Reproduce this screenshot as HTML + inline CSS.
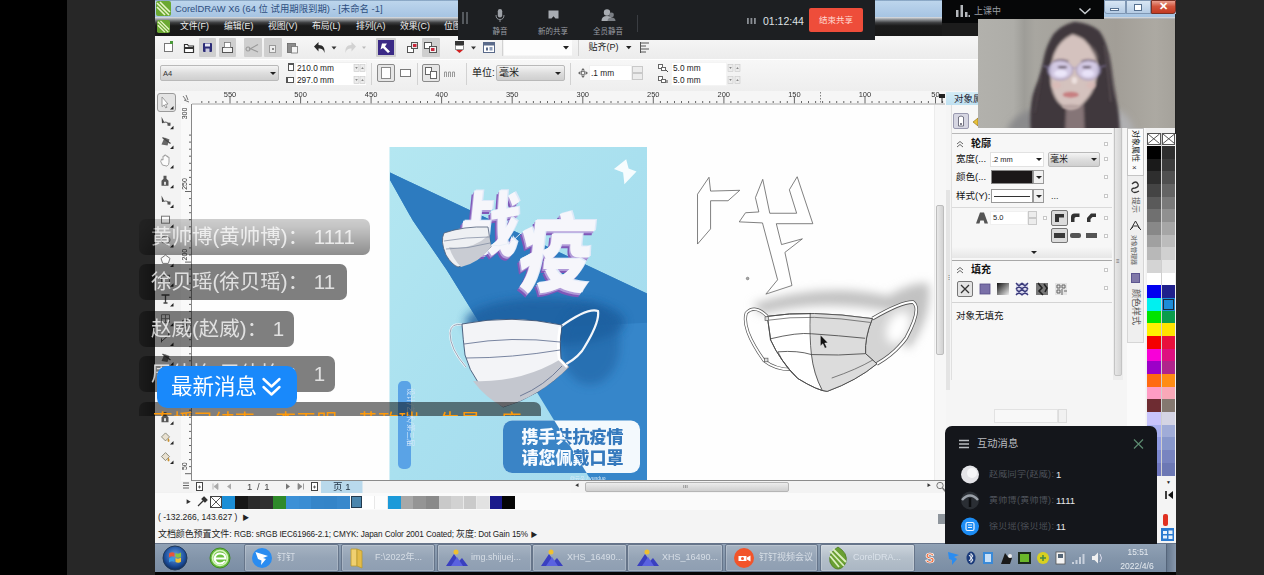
<!DOCTYPE html>
<html lang="zh-CN">
<head>
<meta charset="utf-8">
<title>CorelDRAW X6 - 直播</title>
<style>
html,body{margin:0;padding:0;background:#000;}
body{width:1264px;height:575px;overflow:hidden;position:relative;font-family:"Liberation Sans","Noto Sans CJK SC",sans-serif;}
.abs,.a{position:absolute;}
#stage{position:absolute;left:0;top:0;width:1264px;height:575px;overflow:hidden;background:#000;}
#lgray{left:67px;top:0;width:88px;height:575px;background:#272727;}
#rgray{left:1176px;top:0;width:88px;height:575px;background:#272727;}
#win{left:155px;top:0;width:1021px;height:572px;background:#f1f1f1;overflow:hidden;}
/* coordinates inside #win are absolute page coords via #winin offset */
#winin{position:absolute;left:-155px;top:0;width:1264px;height:575px;filter:blur(0.55px);}
.t{position:absolute;white-space:nowrap;line-height:1;}
#title{left:155px;top:0;width:1021px;height:17px;background:linear-gradient(#6f8fb0 0,#bcd5ec 8%,#b2cde8 50%,#a6c4e2 100%);}
#menu{left:155px;top:16.500px;width:1021px;height:19px;background:linear-gradient(#dfe3e8 0,#8d9094 14%,#3c3d3f 30%,#1b1b1b 46%,#181818 100%);}
#menu .t{color:#ededed;font-size:8.800px;top:5.500px;}
#tb1{left:155px;top:36px;width:1021px;height:23px;background:linear-gradient(#f6f6f6,#ececec);}
#tb2{left:155px;top:59px;width:1021px;height:32px;background:linear-gradient(#f7f7f7,#eeeeee);border-top:1px solid #fff;box-sizing:border-box;}
.hl{position:absolute;background:#cfcfcf;border-radius:1px;}
.sep{position:absolute;width:1px;background:#d2d2d2;}
.wbox{position:absolute;background:#fff;border:1px solid #e2e2e2;box-sizing:border-box;}
.dd{position:absolute;background:linear-gradient(#f4f4f4,#dcdcdc 55%,#cfcfcf);border:1px solid #b9b9b9;border-radius:2px;box-sizing:border-box;}
.arr{position:absolute;width:0;height:0;border-left:3px solid transparent;border-right:3px solid transparent;border-top:3.5px solid #222;}
.s9{font-size:8.300px;color:#222;}
.tbn{position:absolute;top:544px;height:28px;box-sizing:border-box;border:1px solid #66758a;border-radius:2px;background:linear-gradient(#a6b3c2,#95a4b6 50%,#8e9eb2);box-shadow:inset 0 0 0 1px rgba(255,255,255,.2);}
.tbn.act{background:linear-gradient(#ccd4dc,#b4bfca 50%,#aab6c3);}
.tbt{position:absolute;top:553px;font-size:9px;color:#dfe5ec;opacity:.88;white-space:nowrap;line-height:1;}
#chat{position:absolute;left:139px;top:205px;width:420px;height:211px;overflow:hidden;-webkit-mask-image:linear-gradient(to bottom,rgba(0,0,0,.25) 0,rgba(0,0,0,.45) 22px,#000 58px);mask-image:linear-gradient(to bottom,rgba(0,0,0,.25) 0,rgba(0,0,0,.45) 22px,#000 58px);}
.bub{position:absolute;left:0;height:36px;background:linear-gradient(to right,rgba(0,0,0,.28) 0,rgba(0,0,0,.5) 17px);border-radius:7px;}
.bub span{position:absolute;left:12px;top:6px;font-size:20.500px;line-height:24px;color:rgba(255,255,255,.76);white-space:nowrap;}
</style>
</head>
<body>
<div id="stage">
<div id="lgray" class="a"></div>
<div id="rgray" class="a"></div>
<div id="win" class="a"><div id="winin">
<!-- title bar -->
<div id="title" class="a"></div>
<svg class="a" style="left:156px;top:1px" width="15" height="15" viewBox="0 0 15 15"><rect width="15" height="15" rx="2" fill="#6aa832"/><path d="M1 2 L13 14 M4 1 L14 11 M1 6 L9 14" stroke="#e8f5c8" stroke-width="1.6" fill="none"/></svg>
<div class="t" style="left:175px;top:4px;font-size:9.400px;color:#2f4f80;">CorelDRAW X6 (64 位 试用期限到期) - [未命名 -1]</div>
<!-- window buttons -->
<div class="a" style="left:1104px;top:0;width:22px;height:14px;background:linear-gradient(#d8e6f4,#b4cbe4);border:1px solid #7f97b4;box-sizing:border-box;border-radius:0 0 0 3px"></div>
<div class="a" style="left:1110px;top:8px;width:9px;height:3px;background:#fff;border:1px solid #56708f;box-sizing:border-box"></div>
<div class="a" style="left:1126px;top:0;width:25px;height:14px;background:linear-gradient(#d8e6f4,#b4cbe4);border:1px solid #7f97b4;box-sizing:border-box;"></div>
<div class="a" style="left:1134px;top:4px;width:8px;height:7px;background:#fff;border:1px solid #56708f;box-sizing:border-box"></div>
<div class="a" style="left:1151px;top:0;width:25px;height:14px;background:linear-gradient(#e9a090,#d2543c 45%,#c23a22);border:1px solid #7a3024;box-sizing:border-box;border-radius:0 0 3px 0"></div>
<div class="t" style="left:1159px;top:1px;font-size:11px;font-weight:bold;color:#fff;">✕</div>
<!-- menu bar -->
<div id="menu" class="a">
<svg class="a" style="left:2px;top:3px" width="13" height="13" viewBox="0 0 15 15"><rect width="15" height="15" rx="2" fill="#6aa832"/><path d="M1 2 L13 14 M4 1 L14 11 M1 6 L9 14" stroke="#e8f5c8" stroke-width="1.6" fill="none"/></svg>
<div class="t" style="left:25px">文件(F)</div>
<div class="t" style="left:69px">编辑(E)</div>
<div class="t" style="left:113px">视图(V)</div>
<div class="t" style="left:157px">布局(L)</div>
<div class="t" style="left:201px">排列(A)</div>
<div class="t" style="left:245px">效果(C)</div>
<div class="t" style="left:289px">位图(B)</div>
</div>
<!-- toolbar 1 -->
<div id="tb1" class="a"></div>
<div class="hl" style="left:199px;top:38px;width:17px;height:19px"></div>
<div class="hl" style="left:219px;top:38px;width:17px;height:19px"></div>
<div class="hl" style="left:244px;top:38px;width:18px;height:19px"></div>
<div class="hl" style="left:264px;top:38px;width:18px;height:19px"></div>
<div class="hl" style="left:376px;top:38px;width:20px;height:19px"></div>
<div class="hl" style="left:422px;top:38px;width:18px;height:19px"></div>
<svg class="a" style="left:155px;top:36px" width="520" height="23" viewBox="155 36 520 23">
 <!-- new -->
 <rect x="164.5" y="43.500" width="8" height="8" fill="#fff" stroke="#777" stroke-width="1"/><rect x="170" y="41" width="3" height="3" fill="#4a9a3a"/>
 <!-- open -->
 <path d="M184.500 52.500 v-8 h3 l1 1.500 h5 v6.500 z" fill="#fff" stroke="#333" stroke-width="1.200"/><rect x="185" y="47" width="8.500" height="2" fill="#333"/>
 <!-- save -->
 <rect x="203" y="43" width="9" height="9" rx="1" fill="#2d2d78"/><rect x="205" y="43.500" width="5" height="3" fill="#e8e8f4"/><rect x="205.500" y="48.500" width="4" height="3.500" fill="#c8c8dc"/>
 <!-- print -->
 <rect x="222.500" y="47.500" width="10" height="5" fill="#f4f4f4" stroke="#555" stroke-width="1"/><rect x="224.500" y="42.500" width="6" height="5" fill="#fff" stroke="#777" stroke-width="0.800"/>
 <!-- cut -->
 <path d="M248 51 a2 2 0 1 1 0.100 0 M249 49.500 l9 -5 M249 48 l9 4" stroke="#9a9a9a" stroke-width="1.100" fill="none"/>
 <!-- copy -->
 <rect x="269.500" y="45.500" width="6" height="7" fill="#ededed" stroke="#9a9a9a" stroke-width="1"/><rect x="272" y="48" width="2" height="2" fill="#8a8a8a"/>
 <!-- paste -->
 <rect x="287.500" y="43.500" width="8" height="9" fill="#8c8c8c" stroke="#666" stroke-width="0.800"/><rect x="291.500" y="46.500" width="6" height="6.500" fill="#f4f4f4" stroke="#777" stroke-width="0.800"/>
 <!-- undo -->
 <path d="M314 46.500 l4.500 -4.500 v3 c5 0 6.500 3 6 8 c-1 -3.500 -2.500 -4.500 -6 -4.500 v3 z" fill="#2a2a2a"/>
 <path d="M331.500 46.500 h5 l-2.500 3 z" fill="#333"/>
 <!-- redo -->
 <path d="M356 46.500 l-4.500 -4.500 v3 c-5 0 -6.500 3 -6 8 c1 -3.500 2.500 -4.500 6 -4.500 v3 z" fill="#d2d2d2"/>
 <path d="M362 46.500 h4 l-2 2.500 z" fill="#bbb"/>
 <!-- import -->
 <rect x="378" y="40" width="16" height="15" fill="#3b2a86"/><path d="M382 43.500 h5 l-2 3 5 5 -2 1.500 -5 -5 -2.500 1.500z" fill="#fff"/>
 <!-- export 1 -->
 <rect x="407.500" y="46.500" width="6" height="6" fill="#fff" stroke="#555" stroke-width="1"/><rect x="411.500" y="42.500" width="6" height="6" fill="#e8e8e8" stroke="#555" stroke-width="1"/><rect x="413" y="44" width="3.500" height="3" fill="#c8283c"/>
 <!-- export 2 -->
 <rect x="424.500" y="42.500" width="7" height="6" fill="#fff" stroke="#555" stroke-width="1"/><rect x="429.500" y="46.500" width="7" height="6" fill="#f1f1f1" stroke="#555" stroke-width="1"/><rect x="431" y="48" width="3.500" height="3" fill="#c8283c"/>
 <!-- pdf-ish -->
 <rect x="455" y="41" width="9" height="4" fill="#333"/><rect x="455.500" y="45.500" width="8" height="4" fill="#fff" stroke="#777" stroke-width="0.800"/><path d="M456 50 l3.500 3 3.500 -3z" fill="#d02020"/>
 <path d="M471 46.500 h5 l-2.500 3 z" fill="#333"/>
 <rect x="483.500" y="42.500" width="11" height="10" fill="#fff" stroke="#5a6a8a" stroke-width="1"/><rect x="484" y="43" width="10" height="2.500" fill="#5a6a8a"/><rect x="486" y="47.500" width="2" height="3" fill="#5a6a8a"/><rect x="489.500" y="47" width="3" height="3.500" fill="#8a9ab8"/>
 <line x1="502.500" y1="40" x2="502.500" y2="56" stroke="#d2d2d2"/>
 <rect x="504" y="39.500" width="68" height="16" fill="#fdfdfd"/>
 <path d="M563 46 h6 l-3 3.500 z" fill="#222"/>
 <line x1="578.500" y1="40" x2="578.500" y2="56" stroke="#d2d2d2"/>
 <path d="M626 46 h5.500 l-2.750 3.200 z" fill="#222"/>
 <path d="M641 43 h8 M641 46 h5 M641 49 h8 M641 52 h5 M640.500 42 v11" stroke="#555" stroke-width="1" fill="none"/>
</svg>
<div class="t s9" style="left:588.500px;top:43px;font-size:9px;">贴齐(P)</div>
<!-- toolbar 2 -->
<div id="tb2" class="a"></div>
<div class="dd" style="left:160px;top:65px;width:119px;height:16px"></div>
<div class="t" style="left:163px;top:70px;font-size:7.500px;color:#333">A4</div>
<div class="arr" style="left:270px;top:72px"></div>
<div class="wbox" style="left:295px;top:62px;width:72px;height:24px;border-color:#f0f0f0"></div>
<svg class="a" style="left:284px;top:62px" width="100" height="26" viewBox="284 62 100 26">
 <rect x="288.500" y="64.500" width="5" height="6" fill="#fff" stroke="#555" stroke-width="1"/><path d="M288 63.500 h6" stroke="#555"/>
 <rect x="287.500" y="77.500" width="6" height="5" fill="#fff" stroke="#555" stroke-width="1"/><path d="M286.500 77 v6" stroke="#555"/>
 <g fill="#ececec" stroke="#c9c9c9" stroke-width="0.600"><rect x="354" y="64.500" width="5" height="7"/><rect x="360" y="64.500" width="5" height="7"/><rect x="354" y="76.500" width="5" height="7"/><rect x="360" y="76.500" width="5" height="7"/></g>
 <g fill="#888"><path d="M355.200 67 h2.600 l-1.300 2z M361.200 69 h2.600 l-1.300 -2z M355.200 79 h2.600 l-1.300 2z M361.200 81 h2.600 l-1.300 -2z"/></g>
</svg>
<div class="t s9" style="left:297px;top:64px;">210.0 mm</div>
<div class="t s9" style="left:297px;top:76px;">297.0 mm</div>
<div class="sep" style="left:371px;top:63px;height:22px"></div>
<div class="a" style="left:377px;top:64px;width:18px;height:18px;border:1px solid #8a8a8a;border-radius:2px;box-sizing:border-box;background:#e6e6e6"></div>
<div class="a" style="left:381px;top:67px;width:10px;height:12px;border:1px solid #8a8a8a;box-sizing:border-box;background:#fff"></div>
<div class="a" style="left:400px;top:69px;width:11px;height:8px;border:1px solid #7a7a7a;box-sizing:border-box;background:#fff"></div>
<div class="sep" style="left:417px;top:63px;height:22px"></div>
<div class="a" style="left:422px;top:64px;width:18px;height:18px;border:1px solid #8a8a8a;border-radius:2px;box-sizing:border-box;background:#e6e6e6"></div>
<div class="a" style="left:425px;top:67px;width:7px;height:8px;border:1px solid #666;box-sizing:border-box;background:#fff"></div>
<div class="a" style="left:430px;top:71px;width:7px;height:8px;border:1px solid #666;box-sizing:border-box;background:#fff"></div>
<svg class="a" style="left:444px;top:68px" width="12" height="10" viewBox="0 0 12 10"><path d="M0.500 9 v-5 h2 v5 M4.500 9 v-5 h2 v5 M8.500 9 v-5 h2 v5" stroke="#999" fill="none"/></svg>
<div class="sep" style="left:466px;top:63px;height:22px"></div>
<div class="t" style="left:472px;top:68px;font-size:10px;color:#222">单位:</div>
<div class="dd" style="left:496px;top:65px;width:69px;height:16px"></div>
<div class="t" style="left:499px;top:68px;font-size:10px;color:#222">毫米</div>
<div class="arr" style="left:555px;top:72px"></div>
<div class="sep" style="left:570px;top:63px;height:22px"></div>
<svg class="a" style="left:578px;top:68px" width="10" height="10" viewBox="0 0 10 10"><path d="M5 0 l2 2.500 h-4z M5 10 l2 -2.500 h-4z M0 5 l2.500 -2 v4z M10 5 l-2.500 -2 v4z" fill="#666"/><rect x="3.500" y="3.500" width="3" height="3" fill="none" stroke="#666" stroke-width="0.800"/></svg>
<div class="wbox" style="left:589px;top:65px;width:43px;height:16px;border-color:#f0f0f0"></div>
<div class="t s9" style="left:591px;top:69px;">.1 mm</div>
<div class="a" style="left:632px;top:66px;width:11px;height:7px;background:#ececec;border:1px solid #c9c9c9;box-sizing:border-box"></div>
<div class="a" style="left:632px;top:73px;width:11px;height:7px;background:#ececec;border:1px solid #c9c9c9;box-sizing:border-box"></div>
<svg class="a" style="left:656px;top:62px" width="90" height="26" viewBox="656 62 90 26">
 <rect x="658.500" y="64.500" width="4" height="4" fill="#fff" stroke="#666"/><rect x="661.500" y="67.500" width="4" height="3" fill="#fff" stroke="#666"/><path d="M666 70 l2 2" stroke="#444"/>
 <rect x="658.500" y="76.500" width="4" height="4" fill="#fff" stroke="#666"/><rect x="661.500" y="79.500" width="4" height="3" fill="#fff" stroke="#666"/><path d="M667 80 v3" stroke="#444"/>
 <g fill="#ececec" stroke="#c9c9c9" stroke-width="0.600"><rect x="728" y="64.500" width="5" height="7"/><rect x="735" y="64.500" width="5" height="7"/><rect x="728" y="76.500" width="5" height="7"/><rect x="735" y="76.500" width="5" height="7"/></g>
 <g fill="#888"><path d="M729.200 67 h2.600 l-1.300 2z M736.200 69 h2.600 l-1.300 -2z M729.200 79 h2.600 l-1.300 2z M736.200 81 h2.600 l-1.300 -2z"/></g>
</svg>
<div class="wbox" style="left:671px;top:62px;width:56px;height:24px;border-color:#f4f4f4"></div>
<div class="t s9" style="left:673px;top:64px;">5.0 mm</div>
<div class="t s9" style="left:673px;top:76px;">5.0 mm</div>
<!-- rulers -->
<div class="a" style="left:155px;top:91px;width:1021px;height:14px;background:#f6f6f6"></div>
<div class="a" style="left:155px;top:104px;width:37px;height:388px;background:#f3f3f3"></div>
<div class="a" style="left:181px;top:104px;width:11px;height:377px;background:#f9f9f9;border-right:1px solid #888;box-sizing:border-box"></div>
<svg class="a" style="left:155px;top:91px" width="800" height="400" viewBox="155 91 800 400">
<g stroke="#555" stroke-width="0.9">
<line x1="201.8" y1="101" x2="201.8" y2="103"/>
<line x1="208.8" y1="101" x2="208.8" y2="103"/>
<line x1="215.9" y1="101" x2="215.9" y2="103"/>
<line x1="222.9" y1="101" x2="222.9" y2="103"/>
<line x1="230.0" y1="97" x2="230.0" y2="103.500"/>
<line x1="237.1" y1="101" x2="237.1" y2="103"/>
<line x1="244.1" y1="101" x2="244.1" y2="103"/>
<line x1="251.2" y1="101" x2="251.2" y2="103"/>
<line x1="258.2" y1="101" x2="258.2" y2="103"/>
<line x1="265.3" y1="101" x2="265.3" y2="103"/>
<line x1="272.3" y1="101" x2="272.3" y2="103"/>
<line x1="279.4" y1="101" x2="279.4" y2="103"/>
<line x1="286.4" y1="101" x2="286.4" y2="103"/>
<line x1="293.5" y1="101" x2="293.5" y2="103"/>
<line x1="300.6" y1="97" x2="300.6" y2="103.500"/>
<line x1="307.6" y1="101" x2="307.6" y2="103"/>
<line x1="314.7" y1="101" x2="314.7" y2="103"/>
<line x1="321.7" y1="101" x2="321.7" y2="103"/>
<line x1="328.8" y1="101" x2="328.8" y2="103"/>
<line x1="335.8" y1="101" x2="335.8" y2="103"/>
<line x1="342.9" y1="101" x2="342.9" y2="103"/>
<line x1="349.9" y1="101" x2="349.9" y2="103"/>
<line x1="357.0" y1="101" x2="357.0" y2="103"/>
<line x1="364.0" y1="101" x2="364.0" y2="103"/>
<line x1="371.1" y1="97" x2="371.1" y2="103.500"/>
<line x1="378.2" y1="101" x2="378.2" y2="103"/>
<line x1="385.2" y1="101" x2="385.2" y2="103"/>
<line x1="392.3" y1="101" x2="392.3" y2="103"/>
<line x1="399.3" y1="101" x2="399.3" y2="103"/>
<line x1="406.4" y1="101" x2="406.4" y2="103"/>
<line x1="413.4" y1="101" x2="413.4" y2="103"/>
<line x1="420.5" y1="101" x2="420.5" y2="103"/>
<line x1="427.5" y1="101" x2="427.5" y2="103"/>
<line x1="434.6" y1="101" x2="434.6" y2="103"/>
<line x1="441.6" y1="97" x2="441.6" y2="103.500"/>
<line x1="448.7" y1="101" x2="448.7" y2="103"/>
<line x1="455.8" y1="101" x2="455.8" y2="103"/>
<line x1="462.8" y1="101" x2="462.8" y2="103"/>
<line x1="469.9" y1="101" x2="469.9" y2="103"/>
<line x1="476.9" y1="101" x2="476.9" y2="103"/>
<line x1="484.0" y1="101" x2="484.0" y2="103"/>
<line x1="491.0" y1="101" x2="491.0" y2="103"/>
<line x1="498.1" y1="101" x2="498.1" y2="103"/>
<line x1="505.1" y1="101" x2="505.1" y2="103"/>
<line x1="512.2" y1="97" x2="512.2" y2="103.500"/>
<line x1="519.3" y1="101" x2="519.3" y2="103"/>
<line x1="526.3" y1="101" x2="526.3" y2="103"/>
<line x1="533.4" y1="101" x2="533.4" y2="103"/>
<line x1="540.4" y1="101" x2="540.4" y2="103"/>
<line x1="547.5" y1="101" x2="547.5" y2="103"/>
<line x1="554.5" y1="101" x2="554.5" y2="103"/>
<line x1="561.6" y1="101" x2="561.6" y2="103"/>
<line x1="568.6" y1="101" x2="568.6" y2="103"/>
<line x1="575.7" y1="101" x2="575.7" y2="103"/>
<line x1="582.8" y1="97" x2="582.8" y2="103.500"/>
<line x1="589.8" y1="101" x2="589.8" y2="103"/>
<line x1="596.9" y1="101" x2="596.9" y2="103"/>
<line x1="603.9" y1="101" x2="603.9" y2="103"/>
<line x1="611.0" y1="101" x2="611.0" y2="103"/>
<line x1="618.0" y1="101" x2="618.0" y2="103"/>
<line x1="625.1" y1="101" x2="625.1" y2="103"/>
<line x1="632.1" y1="101" x2="632.1" y2="103"/>
<line x1="639.2" y1="101" x2="639.2" y2="103"/>
<line x1="646.2" y1="101" x2="646.2" y2="103"/>
<line x1="653.3" y1="97" x2="653.3" y2="103.500"/>
<line x1="660.4" y1="101" x2="660.4" y2="103"/>
<line x1="667.4" y1="101" x2="667.4" y2="103"/>
<line x1="674.5" y1="101" x2="674.5" y2="103"/>
<line x1="681.5" y1="101" x2="681.5" y2="103"/>
<line x1="688.6" y1="101" x2="688.6" y2="103"/>
<line x1="695.6" y1="101" x2="695.6" y2="103"/>
<line x1="702.7" y1="101" x2="702.7" y2="103"/>
<line x1="709.7" y1="101" x2="709.7" y2="103"/>
<line x1="716.8" y1="101" x2="716.8" y2="103"/>
<line x1="723.9" y1="97" x2="723.9" y2="103.500"/>
<line x1="730.9" y1="101" x2="730.9" y2="103"/>
<line x1="738.0" y1="101" x2="738.0" y2="103"/>
<line x1="745.0" y1="101" x2="745.0" y2="103"/>
<line x1="752.1" y1="101" x2="752.1" y2="103"/>
<line x1="759.1" y1="101" x2="759.1" y2="103"/>
<line x1="766.2" y1="101" x2="766.2" y2="103"/>
<line x1="773.2" y1="101" x2="773.2" y2="103"/>
<line x1="780.3" y1="101" x2="780.3" y2="103"/>
<line x1="787.3" y1="101" x2="787.3" y2="103"/>
<line x1="794.4" y1="97" x2="794.4" y2="103.500"/>
<line x1="801.5" y1="101" x2="801.5" y2="103"/>
<line x1="808.5" y1="101" x2="808.5" y2="103"/>
<line x1="815.6" y1="101" x2="815.6" y2="103"/>
<line x1="822.6" y1="101" x2="822.6" y2="103"/>
<line x1="829.7" y1="101" x2="829.7" y2="103"/>
<line x1="836.7" y1="101" x2="836.7" y2="103"/>
<line x1="843.8" y1="101" x2="843.8" y2="103"/>
<line x1="850.8" y1="101" x2="850.8" y2="103"/>
<line x1="857.9" y1="101" x2="857.9" y2="103"/>
<line x1="865.0" y1="97" x2="865.0" y2="103.500"/>
<line x1="872.0" y1="101" x2="872.0" y2="103"/>
<line x1="879.1" y1="101" x2="879.1" y2="103"/>
<line x1="886.1" y1="101" x2="886.1" y2="103"/>
<line x1="893.2" y1="101" x2="893.2" y2="103"/>
<line x1="900.2" y1="101" x2="900.2" y2="103"/>
<line x1="907.3" y1="101" x2="907.3" y2="103"/>
<line x1="914.3" y1="101" x2="914.3" y2="103"/>
<line x1="921.4" y1="101" x2="921.4" y2="103"/>
<line x1="928.4" y1="101" x2="928.4" y2="103"/>
<line x1="935.5" y1="97" x2="935.5" y2="103.500"/>
<line x1="942.6" y1="101" x2="942.6" y2="103"/>
</g>
<line x1="192" y1="104" x2="945" y2="104" stroke="#999" stroke-width="0.800"/>
<g font-family="Liberation Sans, sans-serif" font-size="7.500" fill="#333" text-anchor="middle">
<text x="230.0" y="97">550</text>
<text x="300.6" y="97">500</text>
<text x="371.1" y="97">450</text>
<text x="441.6" y="97">400</text>
<text x="512.2" y="97">350</text>
<text x="582.8" y="97">300</text>
<text x="653.3" y="97">250</text>
<text x="723.8" y="97">200</text>
<text x="794.4" y="97">150</text>
<text x="864.9" y="97">100</text>
<text x="935.5" y="97">50</text>
</g>
<line x1="820.500" y1="92" x2="820.500" y2="104" stroke="#666" stroke-width="0.800" stroke-dasharray="1.500 1.500"/>
<g stroke="#555" stroke-width="0.9">
<line x1="189" y1="135.1" x2="191" y2="135.1"/>
<line x1="189" y1="142.1" x2="191" y2="142.1"/>
<line x1="189" y1="149.2" x2="191" y2="149.2"/>
<line x1="189" y1="156.2" x2="191" y2="156.2"/>
<line x1="189" y1="163.3" x2="191" y2="163.3"/>
<line x1="189" y1="170.3" x2="191" y2="170.3"/>
<line x1="189" y1="177.4" x2="191" y2="177.4"/>
<line x1="189" y1="184.4" x2="191" y2="184.4"/>
<line x1="185" y1="191.5" x2="191" y2="191.5"/>
<line x1="189" y1="198.6" x2="191" y2="198.6"/>
<line x1="189" y1="205.6" x2="191" y2="205.6"/>
<line x1="189" y1="212.7" x2="191" y2="212.7"/>
<line x1="189" y1="219.7" x2="191" y2="219.7"/>
<line x1="189" y1="226.8" x2="191" y2="226.8"/>
<line x1="189" y1="233.8" x2="191" y2="233.8"/>
<line x1="189" y1="240.9" x2="191" y2="240.9"/>
<line x1="189" y1="247.9" x2="191" y2="247.9"/>
<line x1="189" y1="255.0" x2="191" y2="255.0"/>
<line x1="185" y1="262.1" x2="191" y2="262.1"/>
<line x1="189" y1="269.1" x2="191" y2="269.1"/>
<line x1="189" y1="276.2" x2="191" y2="276.2"/>
<line x1="189" y1="283.2" x2="191" y2="283.2"/>
<line x1="189" y1="290.3" x2="191" y2="290.3"/>
<line x1="189" y1="297.3" x2="191" y2="297.3"/>
<line x1="189" y1="304.4" x2="191" y2="304.4"/>
<line x1="189" y1="311.4" x2="191" y2="311.4"/>
<line x1="189" y1="318.5" x2="191" y2="318.5"/>
<line x1="189" y1="325.5" x2="191" y2="325.5"/>
<line x1="185" y1="332.6" x2="191" y2="332.6"/>
<line x1="189" y1="339.7" x2="191" y2="339.7"/>
<line x1="189" y1="346.7" x2="191" y2="346.7"/>
<line x1="189" y1="353.8" x2="191" y2="353.8"/>
<line x1="189" y1="360.8" x2="191" y2="360.8"/>
<line x1="189" y1="367.9" x2="191" y2="367.9"/>
<line x1="189" y1="374.9" x2="191" y2="374.9"/>
<line x1="189" y1="382.0" x2="191" y2="382.0"/>
<line x1="189" y1="389.0" x2="191" y2="389.0"/>
<line x1="189" y1="396.1" x2="191" y2="396.1"/>
<line x1="185" y1="403.1" x2="191" y2="403.1"/>
<line x1="189" y1="410.2" x2="191" y2="410.2"/>
<line x1="189" y1="417.3" x2="191" y2="417.3"/>
<line x1="189" y1="424.3" x2="191" y2="424.3"/>
<line x1="189" y1="431.4" x2="191" y2="431.4"/>
<line x1="189" y1="438.4" x2="191" y2="438.4"/>
<line x1="189" y1="445.5" x2="191" y2="445.5"/>
<line x1="189" y1="452.5" x2="191" y2="452.5"/>
<line x1="189" y1="459.6" x2="191" y2="459.6"/>
<line x1="189" y1="466.6" x2="191" y2="466.6"/>
<line x1="185" y1="473.7" x2="191" y2="473.7"/>
</g>
<g font-family="Liberation Sans, sans-serif" font-size="7" fill="#333" text-anchor="middle">
<text transform="translate(187,113.5) rotate(-90)">300</text>
<text transform="translate(187,184.0) rotate(-90)">250</text>
<text transform="translate(187,254.6) rotate(-90)">200</text>
<text transform="translate(187,325.1) rotate(-90)">150</text>
<text transform="translate(187,395.6) rotate(-90)">100</text>
<text transform="translate(187,466.2) rotate(-90)">50</text>
</g>
<path d="M183 96 l3 4 M186 95 l2 5 M184 100 l5 2" stroke="#555" stroke-width="0.800" fill="none"/>
</svg>
<!-- toolbox -->
<div class="a" style="left:157px;top:93px;width:19px;height:19px;border:1px solid #9a9a9a;border-radius:3px;background:#e4e4e4;box-sizing:border-box"></div>
<svg class="a" style="left:155px;top:91px" width="26" height="400" viewBox="155 91 26 400">
<path d="M162 97.0 l6 7 -2.5 0.3 1.5 3 -1.3 0.6 -1.5 -3 -2.2 1.7z" fill="#fff" stroke="#8a8a8a" stroke-width="0.8"/>
<path d="M173.5 106.0 v3.5 h-3.5z" fill="#222"/>
<path d="M161.5 116.7 l3 6 -2.5 0.5z" fill="#444"/><path d="M163.5 122.7 q4 -2 6 3" stroke="#777" stroke-width="1.1" fill="none"/><rect x="167.5" y="122.7" width="3" height="3" fill="#555"/>
<path d="M173.5 125.7 v3.5 h-3.5z" fill="#222"/>
<path d="M161.5 144.4 l3 -7 5 2 -2 6z" fill="#666"/><path d="M162.5 137.4 l8 6" stroke="#444" stroke-width="1.2"/>
<path d="M173.5 145.4 v3.5 h-3.5z" fill="#222"/>
<path d="M162.5 165.1 q-3 -4 -1 -6 l1.5 1 v-4 h1.5 v-1 h1.5 v1 h1.5 v1 h1.5 v5 q0 3 -2 4z" fill="#fbfbfb" stroke="#8a8a8a" stroke-width="0.8"/>
<path d="M173.5 165.1 v3.5 h-3.5z" fill="#222"/>
<path d="M163.5 175.8 h3 v3 l2 2 v5 h-7 v-5 l2 -2z" fill="#555"/><rect x="164.0" y="181.8" width="2" height="3" fill="#ddd"/>
<path d="M173.5 184.8 v3.5 h-3.5z" fill="#222"/>
<path d="M161.5 195.5 l3 6 -2.5 0.5z" fill="#444"/><path d="M163.5 201.5 q4 -2 6 3" stroke="#777" stroke-width="1.1" fill="none"/><rect x="167.5" y="201.5" width="3" height="3" fill="#555"/>
<path d="M173.5 204.5 v3.5 h-3.5z" fill="#222"/>
<rect x="161.5" y="216.2" width="8" height="7" fill="#fafafa" stroke="#777" stroke-width="1"/>
<path d="M173.5 224.2 v3.5 h-3.5z" fill="#222"/>
<ellipse cx="165.5" cy="239.9" rx="4.5" ry="3.8" fill="#fafafa" stroke="#777" stroke-width="1"/>
<path d="M173.5 243.9 v3.5 h-3.5z" fill="#222"/>
<path d="M165.5 255.10000000000002 l4.5 3.3 -1.7 5 h-5.6 l-1.7 -5z" fill="#fafafa" stroke="#777" stroke-width="1"/>
<path d="M173.5 263.6 v3.5 h-3.5z" fill="#222"/>
<rect x="161.5" y="275.29999999999995" width="8" height="7" fill="#fafafa" stroke="#777" stroke-width="1"/>
<path d="M173.5 283.29999999999995 v3.5 h-3.5z" fill="#222"/>
<path d="M161.5 295.0 h8 M165.5 295.0 v8 M163.5 303.0 h4" stroke="#444" stroke-width="1.3" fill="none"/>
<path d="M173.5 303.0 v3.5 h-3.5z" fill="#222"/>
<path d="M161.5 314.7 h8 v8 h-8z M161.5 318.7 h8 M165.5 314.7 v8" stroke="#777" stroke-width="0.9" fill="#fafafa"/>
<path d="M173.5 322.7 v3.5 h-3.5z" fill="#222"/>
<path d="M161.5 341.4 l8 -7 M161.5 338.4 v4 M168.5 332.4 v4" stroke="#555" stroke-width="1" fill="none"/>
<path d="M173.5 342.4 v3.5 h-3.5z" fill="#222"/>
<path d="M161.5 361.09999999999997 l3 -7 5 2 -2 6z" fill="#666"/><path d="M162.5 354.09999999999997 l8 6" stroke="#444" stroke-width="1.2"/>
<path d="M173.5 362.09999999999997 v3.5 h-3.5z" fill="#222"/>
<ellipse cx="165.5" cy="377.8" rx="4.5" ry="3.8" fill="#fafafa" stroke="#777" stroke-width="1"/>
<path d="M173.5 381.8 v3.5 h-3.5z" fill="#222"/>
<path d="M161.5 401.5 l5 -5 2 2 -5 5z" fill="#999"/><path d="M166.5 394.5 l2 -2 2 2 -2 2z" fill="#444"/>
<path d="M173.5 401.5 v3.5 h-3.5z" fill="#222"/>
<path d="M163.5 412.2 h3 v3 l2 2 v5 h-7 v-5 l2 -2z" fill="#555"/><rect x="164.0" y="418.2" width="2" height="3" fill="#ddd"/>
<path d="M173.5 421.2 v3.5 h-3.5z" fill="#222"/>
<path d="M161.5 436.9 l4 -4 4 4 -4 4z" fill="#e8e0d0" stroke="#776" stroke-width="0.8"/><path d="M168.5 437.9 q2 3 0 4 q-2 -1 0 -4z" fill="#c89030"/>
<path d="M173.5 440.9 v3.5 h-3.5z" fill="#222"/>
<path d="M161.5 456.59999999999997 l4 -4 4 4 -4 4z" fill="#e8e0d0" stroke="#776" stroke-width="0.8"/><path d="M168.5 457.59999999999997 q2 3 0 4 q-2 -1 0 -4z" fill="#c89030"/>
<path d="M173.5 460.59999999999997 v3.5 h-3.5z" fill="#222"/>
</svg>
<!-- canvas -->
<div class="a" style="left:192px;top:105px;width:742px;height:376px;background:#fefefe"></div>
<svg class="a" style="left:192px;top:105px" width="742" height="376" viewBox="192 105 742 376">
<defs>
 <linearGradient id="pbg" x1="0" y1="0" x2="1" y2="1"><stop offset="0" stop-color="#b4e7f1"/><stop offset="0.500" stop-color="#a9e0ef"/><stop offset="1" stop-color="#a3d9ee"/></linearGradient>
 <filter id="b2" x="-20%" y="-20%" width="140%" height="140%"><feGaussianBlur stdDeviation="2"/></filter>
 <filter id="b4" x="-30%" y="-30%" width="160%" height="160%"><feGaussianBlur stdDeviation="5"/></filter>
 <filter id="b1" x="-10%" y="-10%" width="120%" height="120%"><feGaussianBlur stdDeviation="0.600"/></filter>
 <clipPath id="pc"><rect x="389.500" y="147" width="257.500" height="334"/></clipPath>
 <clipPath id="boxc"><rect x="503" y="420.500" width="137" height="52.500" rx="9"/></clipPath>
</defs>
<!-- poster -->
<rect x="389.500" y="147" width="257.500" height="334" fill="url(#pbg)"/>
<g clip-path="url(#pc)">
 <path d="M390 172.500 L660 299.500 L660 500 L603 500 L586 472 L554.200 420.400 L541.700 400 L508 345 L493.200 345 L469 306 L446.700 270 L412.800 220.600 L390 180 Z" fill="#3686ca"/>
 <path d="M390 172.500 L660 299.500 L660 322 L500 330 L484 330 L469 306 L446.700 270 L412.800 220.600 L390 180 Z" fill="#2d7bbf"/>
 <!-- soft shadow behind big mask -->
 <ellipse cx="545" cy="322" rx="80" ry="24" fill="#1e5f9f" opacity="0.800" filter="url(#b4)"/>
 <ellipse cx="590" cy="345" rx="30" ry="40" fill="#1e5f9f" opacity="0.550" filter="url(#b4)"/>
 <!-- lightning -->
 <path d="M626.200 159.200 L628.600 168.400 L636.500 171.400 L624.400 184.200 L623.100 172.600 L614 169 Z" fill="#f6fcfe"/>
 <!-- title text 战疫 -->
 <g font-family="Noto Sans CJK SC, sans-serif" font-weight="900">
  <g transform="translate(456,250) skewX(-6) scale(0.98,1.14)">
   <text x="-2.500" y="3.500" font-size="62" fill="#8058b8">战</text>
   <text x="-1" y="2" font-size="62" fill="#b09ad8">战</text>
   <text x="1.500" y="-1" font-size="62" fill="#dfe9f8">战</text>
   <text x="0" y="0" font-size="62" fill="#f6f6fb">战</text>
  </g>
  <g transform="translate(516,285) skewX(-6) scale(0.96,1.1)">
   <text x="-2.500" y="3.500" font-size="78" fill="#8058b8">疫</text>
   <text x="-1" y="2" font-size="78" fill="#b09ad8">疫</text>
   <text x="1.500" y="-1" font-size="78" fill="#dfe9f8">疫</text>
   <text x="0" y="0" font-size="78" fill="#f6f6fb">疫</text>
  </g>
 </g>
 <!-- small mask -->
 <g transform="translate(3,1)">
  <path d="M441 232 q-4 8 2 22 q6 10 12 12 q18 -4 33 -20 l-3 -20 q-24 -1 -44 6z" fill="#eef0f3" stroke="#51607a" stroke-width="0.800"/>
  <path d="M458 266 q18 -4 30 -20 l-2 -12 q-18 16 -40 12 q4 12 12 20z" fill="#c9ccd3"/>
  <path d="M441 240 q22 -4 45 -4 M443 248 q22 0 44 -6" stroke="#7a859c" stroke-width="0.700" fill="none"/>
  <path d="M488 244 q16 4 30 -12" stroke="#e8eef6" stroke-width="0.900" fill="none"/>
 </g>
 <!-- big mask -->
 <g>
  <path d="M463 325 q-12 -3 -13 8 q0 16 16 34" stroke="#f3f6fa" stroke-width="2.200" fill="none"/>
  <path d="M463 325 q-12 -3 -13 8 q0 16 16 34" stroke="#3d5273" stroke-width="0.500" fill="none"/>
  <path d="M560 327 q28 -20 38 -16 q2 12 -16 40 q-8 10 -22 16" stroke="#f3f6fa" stroke-width="2.200" fill="none"/>
  <path d="M462 324 q50 -10 100 1 q-3 16 -1 34 l8 8 q-30 30 -66 40 q-30 -22 -38 -52 q-2 -16 -3 -31z" fill="#f3f4f7" stroke="#3d5273" stroke-width="0.900"/>
  <path d="M503 407 q36 -10 66 -40 l-8 -8 q-40 24 -88 22 q12 16 30 26z" fill="#c4c7cf"/>
  <path d="M560 327 q-3 16 -1 32 l8 8" stroke="#fff" stroke-width="2.500" fill="none"/>
  <path d="M464 344 q48 -8 96 -2 M466 358 q46 0 94 -8 M520 396 q24 -10 42 -30" stroke="#59688a" stroke-width="0.800" fill="none"/>
 </g>
 <!-- left vertical tag -->
 <rect x="398" y="381" width="13" height="88" rx="5" fill="#5aa3e6"/>
 <text transform="translate(407.500,388) rotate(90)" font-size="7.500" fill="#cfe6fb" font-family="Noto Sans CJK SC, sans-serif">设计/艺术/第三届</text>
 <!-- text box -->
 <rect x="503" y="420.500" width="137" height="52.500" rx="9" fill="#f3f9fd"/>
 <g clip-path="url(#boxc)"><path d="M490 410 L547.800 410 L591 480 L490 480 Z" fill="#3a84c6"/></g>
 <clipPath id="lc"><path d="M490 410 L547.800 410 L591 480 L490 480 Z"/></clipPath>
 <clipPath id="rc"><path d="M547.800 410 L660 410 L660 480 L591 480 Z"/></clipPath>
 <g font-family="Noto Sans CJK SC, sans-serif" font-weight="900" font-size="17">
  <g clip-path="url(#lc)" fill="#f7fbff"><text x="521.500" y="442.500">携手共抗疫情</text><text x="521.500" y="463.500">请您佩戴口罩</text></g>
  <g clip-path="url(#rc)" fill="#3579bd"><text x="521.500" y="442.500">携手共抗疫情</text><text x="521.500" y="463.500">请您佩戴口罩</text></g>
 </g>
 <text x="570" y="479.500" font-size="5" fill="#d8ecf8" font-family="Liberation Sans, sans-serif">@云朵 / yunduo</text>
</g>
<!-- outline shapes -->
<svg x="685" y="165" width="150" height="150" viewBox="0 0 575 575">
 <g fill="#fff" stroke="#5e5e5e" stroke-width="3" stroke-linejoin="miter">
  <path d="M92 47 L98 100 L210 97 L165 137 L98 137 L98 245 L48 303 L48 112 Z"/>
  <path d="M298 55 L270 125 L283 180 L232 183 L208 218 L297 222 L355 440 L310 495 L410 462 L383 335 L450 283 L370 305 L350 225 L490 225 L430 45 L400 95 L428 185 L325 185 Z"/>
 </g>
 <circle cx="240" cy="435" r="5" fill="#aaa" stroke="#555" stroke-width="2"/>
</svg>
<!-- right mask w/ shadow -->
<svg x="730" y="270" width="200" height="130" viewBox="0 0 885 575" overflow="visible">
 <defs><filter id="mb" x="-30%" y="-60%" width="160%" height="220%"><feGaussianBlur stdDeviation="22"/></filter></defs>
 <path d="M100 150 Q 420 50 700 115 Q 800 50 880 60 Q 900 200 790 350 L 740 300 Q 800 180 720 185 Q 400 125 140 195 Z" fill="#c2c2c2" filter="url(#mb)"/>
 <!-- ear loops -->
 <path d="M165 205 Q110 150 72 190 Q50 260 150 400 Q200 440 270 440" fill="none" stroke="#555" stroke-width="14"/>
 <path d="M165 205 Q110 150 72 190 Q50 260 150 400 Q200 440 270 440" fill="none" stroke="#fff" stroke-width="8"/>
 <path d="M630 215 Q760 140 810 142 Q850 170 780 300 Q730 370 650 415 L600 370 Q595 300 630 215Z" fill="#d4d4d4"/><ellipse cx="745" cy="255" rx="48" ry="75" transform="rotate(25 745 255)" fill="#fff" filter="url(#mb)"/><path d="M630 215 Q760 140 810 142 Q850 170 780 300 Q730 370 650 415" fill="none" stroke="#555" stroke-width="16"/>
 <path d="M630 215 Q760 140 810 142 Q850 170 780 300 Q730 370 650 415" fill="none" stroke="#fff" stroke-width="9"/>
 <!-- body -->
 <path d="M165 205 Q350 175 630 215 Q595 300 600 370 L650 415 Q560 490 430 537 Q390 535 300 480 Q220 400 180 310 Z" fill="#fff" stroke="#4a4a4a" stroke-width="4"/>
 <path d="M357 190 Q500 195 630 215 Q595 300 600 370 L650 415 Q560 490 430 537 L405 530 Q365 450 360 370 Z" fill="#dcdcdc"/>
 <path d="M165 205 Q350 175 630 215 Q595 300 600 370 L650 415 Q560 490 430 537 Q390 535 300 480 Q220 400 180 310 Z" fill="none" stroke="#4a4a4a" stroke-width="4"/>
 <path d="M170 222 Q350 192 622 232" fill="none" stroke="#4a4a4a" stroke-width="3"/>
 <path d="M355 190 Q352 300 360 372 Q370 460 408 532" fill="none" stroke="#3a3a3a" stroke-width="3.500"/>
 <path d="M176 305 Q300 275 360 282 Q480 290 598 302" fill="none" stroke="#3a3a3a" stroke-width="3.500"/>
 <path d="M212 362 Q300 355 360 374 Q480 380 600 370" fill="none" stroke="#3a3a3a" stroke-width="3.500"/>
 <path d="M212 362 Q250 440 300 480" fill="none" stroke="#4a4a4a" stroke-width="3"/>
 <path d="M450 478 Q560 440 632 398" fill="none" stroke="#4a4a4a" stroke-width="3"/>
 <rect x="155" y="207" width="16" height="16" fill="#ddd" stroke="#555" stroke-width="3"/>
 <rect x="152" y="390" width="16" height="16" fill="#ddd" stroke="#555" stroke-width="3"/>
 <!-- cursor -->
 <path d="M400 288 L400 336 L411 326 L420 346 L428 342 L419 323 L433 322 Z" fill="#111" stroke="#fff" stroke-width="1.500"/>
</svg>
</svg>
<!-- canvas scrollbars -->
<div class="a" style="left:934px;top:105px;width:12px;height:376px;background:#f7f7f7;border-left:1px solid #ececec;box-sizing:border-box"></div>
<div class="a" style="left:936px;top:205px;width:8px;height:150px;background:linear-gradient(90deg,#e9e9e9,#d2d2d2);border:1px solid #bdbdbd;border-radius:2px;box-sizing:border-box"></div>
<div class="a" style="left:192px;top:480px;width:754px;height:13px;background:#f3f3f3;border-top:1px solid #8c8c8c;box-sizing:border-box"></div>
<div class="a" style="left:585px;top:482px;width:204px;height:10px;background:linear-gradient(#ececec,#cfcfcf);border:1px solid #b5b5b5;border-radius:2px;box-sizing:border-box"></div>
<div class="t" style="left:683px;top:483px;font-size:6px;color:#666;letter-spacing:0">ııı</div>
<div class="t" style="left:575px;top:484px;font-size:4px;color:#333">◀</div>
<div class="t" style="left:927px;top:484px;font-size:4px;color:#333">▶</div>
<svg class="a" style="left:935px;top:480px" width="12" height="13" viewBox="0 0 12 13"><circle cx="5" cy="5.500" r="3.200" fill="#eee" stroke="#777" stroke-width="1"/><path d="M7.500 8 l3 3.500" stroke="#777" stroke-width="1.500"/></svg>
<!-- page nav -->
<div class="a" style="left:192px;top:481px;width:379px;height:12px;background:#f4f4f4"></div>
<svg class="a" style="left:180px;top:480px" width="400" height="14" viewBox="180 480 400 14">
<path d="M183 483 h6 M183 485.500 h6 M183 488 h6" stroke="#666" stroke-width="1"/>
<rect x="196.500" y="482.500" width="6" height="8" fill="#fff" stroke="#444" stroke-width="1"/><path d="M198 487 h3 M199.500 485.500 v3" stroke="#444" stroke-width="0.800"/>
<path d="M213 483.500 v6 M218 483.500 l-4 3 4 3z" fill="#aaa" stroke="#aaa" stroke-width="0.800"/>
<path d="M231 483.500 l-4 3 4 3z" fill="#aaa"/>
<path d="M286 483.500 l4 3 -4 3z" fill="#777"/>
<path d="M298 483.500 l4 3 -4 3z M303.500 483.500 v6" fill="#888" stroke="#888" stroke-width="0.800"/>
<rect x="311.500" y="482.500" width="6" height="8" fill="#fff" stroke="#444" stroke-width="1"/><path d="M313 487 h3 M314.500 485.500 v3" stroke="#444" stroke-width="0.800"/>
<rect x="321" y="481" width="41.500" height="12" fill="#b9d9ec"/>
</svg>
<div class="t" style="left:247px;top:482px;font-size:9.500px;color:#444;letter-spacing:1px">1 / 1</div>
<div class="t" style="left:333px;top:482px;font-size:9.500px;color:#234">页 1</div>
<!-- doc palette -->
<div class="a" style="left:155px;top:493px;width:791px;height:17px;background:#fafafa"></div>
<div class="t" style="left:186px;top:499px;font-size:5px;color:#333">▶</div>
<svg class="a" style="left:196px;top:496px" width="12" height="12" viewBox="0 0 12 12"><path d="M2 10 l5 -5 M6 3 l3 3 M8 1 l3 3 -2 2 -3 -3z" stroke="#333" stroke-width="1.200" fill="#333"/></svg>
<div class="a" style="left:209.5px;top:496px;width:12px;height:12px;background:#fff;border:1px solid #444;box-sizing:border-box"></div>
<svg class="a" style="left:209.5px;top:496px" width="12" height="12"><path d="M1 1 L11 11 M11 1 L1 11" stroke="#444" stroke-width="0.900"/></svg>
<div class="a" style="left:222.2px;top:496px;width:13.0px;height:12.500px;background:#1b8ed6"></div>
<div class="a" style="left:235.0px;top:496px;width:13.0px;height:12.500px;background:#161616"></div>
<div class="a" style="left:247.7px;top:496px;width:13.0px;height:12.500px;background:#2b2b2b"></div>
<div class="a" style="left:260.4px;top:496px;width:13.0px;height:12.500px;background:#303030"></div>
<div class="a" style="left:273.1px;top:496px;width:13.0px;height:12.500px;background:#2f8a2a"></div>
<div class="a" style="left:285.9px;top:496px;width:13.0px;height:12.500px;background:#3c90d6"></div>
<div class="a" style="left:298.6px;top:496px;width:13.0px;height:12.500px;background:#3a8dd3"></div>
<div class="a" style="left:311.3px;top:496px;width:13.0px;height:12.500px;background:#3585c9"></div>
<div class="a" style="left:324.1px;top:496px;width:13.0px;height:12.500px;background:#3484c8"></div>
<div class="a" style="left:336.8px;top:496px;width:13.0px;height:12.500px;background:#3888cc"></div>
<div class="a" style="left:350.5px;top:496px;width:11px;height:12px;background:#4b86ad;border:1px solid #223a4e;box-sizing:border-box"></div>
<div class="a" style="left:362.3px;top:496px;width:13.0px;height:12.500px;background:#ffffff;border-right:1px solid #e8e8e8;box-sizing:border-box"></div>
<div class="a" style="left:375.0px;top:496px;width:13.0px;height:12.500px;background:#fdfdfd;border-right:1px solid #e8e8e8;box-sizing:border-box"></div>
<div class="a" style="left:387.7px;top:496px;width:13.0px;height:12.500px;background:#1c9ad9"></div>
<div class="a" style="left:400.5px;top:496px;width:13.0px;height:12.500px;background:#a8a8a8"></div>
<div class="a" style="left:413.2px;top:496px;width:13.0px;height:12.500px;background:#959595"></div>
<div class="a" style="left:425.9px;top:496px;width:13.0px;height:12.500px;background:#8a8a8a"></div>
<div class="a" style="left:438.6px;top:496px;width:13.0px;height:12.500px;background:#c9c9c9;border-right:1px solid #e8e8e8;box-sizing:border-box"></div>
<div class="a" style="left:451.4px;top:496px;width:13.0px;height:12.500px;background:#d2d2d2;border-right:1px solid #e8e8e8;box-sizing:border-box"></div>
<div class="a" style="left:464.1px;top:496px;width:13.0px;height:12.500px;background:#cacaca;border-right:1px solid #e8e8e8;box-sizing:border-box"></div>
<div class="a" style="left:476.8px;top:496px;width:13.0px;height:12.500px;background:#e2e2e2;border-right:1px solid #e8e8e8;box-sizing:border-box"></div>
<div class="a" style="left:489.6px;top:496px;width:13.0px;height:12.500px;background:#1a1a8c"></div>
<div class="a" style="left:502.3px;top:496px;width:13.0px;height:12.500px;background:#050505"></div>
<!-- status -->
<div class="a" style="left:155px;top:510px;width:791px;height:33px;background:#f4f4f4"></div>
<div class="t" style="left:158px;top:513px;font-size:8.500px;color:#222">( -132.266, 143.627 )&nbsp; <span style="font-size:7px">▶</span></div>
<div class="t" style="left:158px;top:529.500px;font-size:9px;color:#222;letter-spacing:-0.100px">文档颜色预置文件: <span style="font-size:8.200px">RGB: sRGB IEC61966-2.1; CMYK: Japan Color 2001 Coated; </span>灰度<span style="font-size:8.200px">: Dot Gain 15%</span> <span style="font-size:7px">▶</span></div>
<div class="a" style="left:938px;top:514px;width:8px;height:10px;background:#8e959c"></div>
<!-- docker -->
<div class="a" style="left:946px;top:91px;width:230px;height:452px;background:#f5f5f5"></div>
<div class="a" style="left:946px;top:92px;width:40px;height:13px;background:linear-gradient(#d4ecf6,#bfe0f0)"></div>
<div class="t" style="left:954px;top:94px;font-size:9.500px;color:#223">对象属性</div>
<svg class="a" style="left:938px;top:92px" width="9" height="13" viewBox="0 0 9 13"><path d="M1 2 h6 v4 h-6z" fill="#222"/><path d="M4 6 v5" stroke="#222"/></svg>
<div class="a" style="left:951px;top:105px;width:162px;height:275px;background:#f7f7f7;border-left:1px solid #e0e0e0;box-sizing:border-box"></div>
<div class="a" style="left:946px;top:190px;width:4px;height:200px;background:#e4e4e4"></div>
<div class="t" style="left:946px;top:274px;font-size:6px;color:#555">⋮</div>
<div class="a" style="left:953px;top:113px;width:16px;height:16px;border:1px solid #9a9ab0;border-radius:2px;background:#d6d6e2;box-sizing:border-box"></div>
<svg class="a" style="left:953px;top:108px" width="40" height="24" viewBox="953 108 40 24"><path d="M958.500 117 q2.500 -2 5 0 v9 h-5z" fill="#fff" stroke="#667" stroke-width="0.900"/><circle cx="961" cy="124" r="0.900" fill="#445"/><path d="M973 122 l5 -4 v8z" fill="#e8c23a" stroke="#8a6a10" stroke-width="0.600"/></svg>
<div class="a" style="left:952px;top:133px;width:160px;height:1px;background:#b8b8b8"></div>
<svg class="a" style="left:956px;top:139.5px" width="8" height="8" viewBox="0 0 8 8"><path d="M1 4 l3 -2.500 3 2.500 M1 7 l3 -2.500 3 2.500" stroke="#555" stroke-width="0.900" fill="none"/></svg>
<div class="t" style="left:971px;top:138.5px;font-size:10px;font-weight:bold;color:#111">轮廓</div>
<div class="a" style="left:1104px;top:141.5px;width:4px;height:4px;border:1px solid #c8c8c8;background:#fff;box-sizing:border-box"></div>
<div class="t" style="left:956px;top:154px;font-size:9.500px;color:#111">宽度(...</div>
<div class="a" style="left:1104px;top:157px;width:4px;height:4px;border:1px solid #c8c8c8;background:#fff;box-sizing:border-box"></div>
<div class="wbox" style="left:990px;top:152px;width:54px;height:15px"></div>
<div class="t" style="left:992px;top:156px;font-size:7.500px;color:#222">.2 mm</div>
<div class="arr" style="left:1036px;top:158px"></div>
<div class="dd" style="left:1048px;top:152px;width:52px;height:15px"></div>
<div class="t" style="left:1050px;top:155px;font-size:9px;color:#111">毫米</div>
<div class="arr" style="left:1091px;top:158px"></div>
<div class="t" style="left:956px;top:172px;font-size:9.500px;color:#111">颜色(...</div>
<div class="a" style="left:1104px;top:175px;width:4px;height:4px;border:1px solid #c8c8c8;background:#fff;box-sizing:border-box"></div>
<div class="a" style="left:991px;top:170px;width:42px;height:14px;background:#1a1718;border:1px solid #888;box-sizing:border-box"></div>
<div class="a" style="left:1033px;top:170px;width:11px;height:14px;background:#f1f1f1;border:1px solid #999;box-sizing:border-box"></div>
<div class="arr" style="left:1035.500px;top:176px"></div>
<div class="t" style="left:956px;top:191px;font-size:9.500px;color:#111">样式(Y):</div>
<div class="a" style="left:1104px;top:194px;width:4px;height:4px;border:1px solid #c8c8c8;background:#fff;box-sizing:border-box"></div>
<div class="a" style="left:991px;top:189px;width:42px;height:14px;background:#fff;border:1px solid #999;box-sizing:border-box"></div>
<div class="a" style="left:994px;top:195.500px;width:36px;height:1px;background:#333"></div>
<div class="a" style="left:1033px;top:189px;width:11px;height:14px;background:#f1f1f1;border:1px solid #999;box-sizing:border-box"></div>
<div class="arr" style="left:1035.500px;top:195px"></div>
<div class="t" style="left:1051px;top:192px;font-size:9px;color:#333">...</div>
<div class="a" style="left:952px;top:207px;width:160px;height:1px;background:#dadada"></div>
<svg class="a" style="left:975px;top:211px" width="14" height="14" viewBox="0 0 14 14"><path d="M1 12.500 L5 1.500 h4 L13 12.500 h-3.500 l-0.800 -3 h-3.400 l-0.800 3z" fill="#555"/></svg>
<div class="wbox" style="left:990px;top:211px;width:38px;height:14px;border-color:#f0f0f0"></div>
<div class="t" style="left:993px;top:214px;font-size:7.500px;color:#222">5.0</div>
<div class="a" style="left:1028px;top:211px;width:9px;height:7px;background:#ececec;border:1px solid #c9c9c9;box-sizing:border-box"></div>
<div class="a" style="left:1028px;top:218px;width:9px;height:7px;background:#ececec;border:1px solid #c9c9c9;box-sizing:border-box"></div>
<div class="a" style="left:1043px;top:216px;width:4px;height:4px;border:1px solid #c8c8c8;background:#fff;box-sizing:border-box"></div>
<div class="a" style="left:1104px;top:216px;width:4px;height:4px;border:1px solid #c8c8c8;background:#fff;box-sizing:border-box"></div>
<div class="a" style="left:1104px;top:234px;width:4px;height:4px;border:1px solid #c8c8c8;background:#fff;box-sizing:border-box"></div>
<div class="a" style="left:1051px;top:210px;width:17px;height:16px;border:1px solid #777;border-radius:2px;background:#dcdcdc;box-sizing:border-box"></div>
<div class="a" style="left:1051px;top:228px;width:17px;height:15px;border:1px solid #777;border-radius:2px;background:#dcdcdc;box-sizing:border-box"></div>
<svg class="a" style="left:1050px;top:209px" width="50" height="36" viewBox="1050 209 50 36">
<path d="M1055 222 v-8 h9 v3.500 h-5 v4.500z" fill="#333"/>
<path d="M1071 222 v-5 q0 -3.500 3.500 -3.500 h5 v3.500 h-3.500 q-1.500 0 -1.500 1.500 v3.500z" fill="#333"/>
<path d="M1087 222 v-4 l4 -4.500 h5 v3.500 h-3.500 l-2 2 v3z" fill="#333"/>
<rect x="1054" y="233" width="11" height="5" fill="#3a3a3a"/><rect x="1070" y="233" width="11" height="5" rx="2" fill="#555"/><rect x="1086" y="233" width="11" height="5" fill="#555"/>
</svg>
<div class="a" style="left:952px;top:247px;width:160px;height:11px;background:linear-gradient(#f7f7f7,#e6e6e6)"></div>
<div class="arr" style="left:1031px;top:251px;border-left-width:3px;border-right-width:3px"></div>
<div class="a" style="left:952px;top:260px;width:160px;height:1px;background:#a8a8a8"></div>
<svg class="a" style="left:956px;top:266px" width="8" height="8" viewBox="0 0 8 8"><path d="M1 4 l3 -2.500 3 2.500 M1 7 l3 -2.500 3 2.500" stroke="#555" stroke-width="0.900" fill="none"/></svg>
<div class="t" style="left:971px;top:265px;font-size:10px;font-weight:bold;color:#111">填充</div>
<div class="a" style="left:1104px;top:268px;width:4px;height:4px;border:1px solid #c8c8c8;background:#fff;box-sizing:border-box"></div>
<div class="a" style="left:957px;top:281px;width:16px;height:16px;border:1px solid #777;border-radius:2px;background:#e4e4e4;box-sizing:border-box"></div>
<svg class="a" style="left:955px;top:279px" width="120" height="20" viewBox="955 279 120 20">
<path d="M961 285 l8 8 M969 285 l-8 8" stroke="#333" stroke-width="1.300"/>
<rect x="980" y="284" width="10" height="10" fill="#7a70a8" stroke="#554c86" stroke-width="0.800"/>
<defs><linearGradient id="fg1" x1="0" y1="0" x2="1" y2="1"><stop offset="0" stop-color="#111"/><stop offset="1" stop-color="#eee"/></linearGradient></defs>
<rect x="997" y="283" width="12" height="12" fill="url(#fg1)"/>
<rect x="1016" y="283" width="12" height="12" fill="#d8d8ec"/><path d="M1016 283 l12 12 M1028 283 l-12 12 M1022 283 l6 6 M1016 289 l6 6 M1022 295 l6 -6 M1016 289 l6 -6" stroke="#3a3a7a" stroke-width="1.500"/>
<rect x="1036" y="283" width="12" height="12" fill="#777"/><path d="M1038 283 l4 5 -3 3 4 4 M1044 284 l3 4 -2 4" stroke="#222" stroke-width="1.600" fill="none"/>
<rect x="1055" y="283" width="12" height="12" fill="#e4e4e4"/><path d="M1057 285 h3 v3 h-3z M1062 285 h3 v3 h-3z M1057 290 h3 v3 h-3z M1062 289 v6 M1064 291 h3" stroke="#666" stroke-width="1" fill="none"/>
</svg>
<div class="a" style="left:1104px;top:286px;width:4px;height:4px;border:1px solid #c8c8c8;background:#fff;box-sizing:border-box"></div>
<div class="a" style="left:952px;top:302px;width:160px;height:1px;background:#d4d4d4"></div>
<div class="t" style="left:956px;top:311px;font-size:9.500px;color:#111">对象无填充</div>
<div class="a" style="left:994px;top:409px;width:64px;height:14px;border:1px solid #e2e2e2;background:#f8f8f8;box-sizing:border-box"></div>
<div class="a" style="left:1058px;top:409px;width:9px;height:14px;border:1px solid #dcdcdc;background:#f1f1f1;box-sizing:border-box"></div>
<div class="a" style="left:1113px;top:105px;width:10px;height:275px;background:#ededed"></div>
<div class="a" style="left:1114px;top:118px;width:8px;height:258px;background:linear-gradient(90deg,#e6e6e6,#d6d6d6);border:1px solid #c4c4c4;border-radius:2px;box-sizing:border-box"></div>
<div class="t" style="left:1115px;top:108px;font-size:5px;color:#444">▲</div>
<div class="t" style="left:1116px;top:258px;font-size:6px;color:#666">≡</div>
<div class="a" style="left:1127px;top:128px;width:18px;height:415px;background:#fafafa"></div>
<div class="a" style="left:1127px;top:128px;width:17px;height:215px;background:#efefef;border:1px solid #d6d6d6;box-sizing:border-box"></div>
<div class="a" style="left:1127px;top:128px;width:17px;height:48px;background:#fbfbfb;border:1px solid #c4c4c4;box-sizing:border-box"></div>
<div class="t" style="left:1131px;top:130px;font-size:8px;color:#222;writing-mode:vertical-rl;text-orientation:sideways;letter-spacing:0">对象属性</div>
<div class="t" style="left:1132px;top:164px;font-size:8px;color:#333">×</div>
<svg class="a" style="left:1129px;top:180px" width="13" height="14" viewBox="0 0 13 14"><path d="M3 4 q4 -4 6 0 q1 3 -3 4 q-4 0 -3 3 q2 3 7 0" stroke="#333" stroke-width="1.300" fill="none"/></svg>
<div class="t" style="left:1131px;top:197px;font-size:8px;color:#555;writing-mode:vertical-rl;text-orientation:sideways;letter-spacing:0">提示</div>
<svg class="a" style="left:1129px;top:219px" width="13" height="12" viewBox="0 0 13 12"><path d="M2 10 l4.500 -8 4.500 8 M4 7 h5 M1 11 l3 -3 M12 11 l-3 -3" stroke="#333" stroke-width="1" fill="none"/></svg>
<div class="t" style="left:1131px;top:235px;font-size:6px;color:#555;writing-mode:vertical-rl;text-orientation:sideways;letter-spacing:0">对象管理器</div>
<div class="a" style="left:1131px;top:273px;width:9px;height:10px;background:#8078a8;border:1px solid #5d5690;box-sizing:border-box"></div>
<div class="t" style="left:1131px;top:289px;font-size:9px;color:#555;writing-mode:vertical-rl;text-orientation:sideways;letter-spacing:0">颜色样式</div>
<!-- palette -->
<div class="a" style="left:1146px;top:128px;width:30px;height:415px;background:#f1f1f1"></div>
<div class="a" style="left:1147px;top:133px;width:13.500px;height:11.500px;background:#fff;border:1px solid #555;box-sizing:border-box"></div>
<svg class="a" style="left:1147px;top:133px" width="13.500" height="11.500"><path d="M1 1 L12.500 10.500 M12.500 1 L1 10.500" stroke="#444" stroke-width="0.900"/></svg>
<div class="a" style="left:1161.5px;top:133px;width:13.500px;height:11.500px;background:#fff;border:1px solid #555;box-sizing:border-box"></div>
<svg class="a" style="left:1161.5px;top:133px" width="13.500" height="11.500"><path d="M1 1 L12.500 10.500 M12.500 1 L1 10.500" stroke="#444" stroke-width="0.900"/></svg>
<div class="a" style="left:1147px;top:146.0px;width:13.500px;height:13.0px;background:#000000"></div>
<div class="a" style="left:1161.500px;top:146.0px;width:13.500px;height:13.0px;background:#2e2e2e"></div>
<div class="a" style="left:1147px;top:158.7px;width:13.500px;height:13.0px;background:#1a1a1a"></div>
<div class="a" style="left:1161.500px;top:158.7px;width:13.500px;height:13.0px;background:#3c3c3c"></div>
<div class="a" style="left:1147px;top:171.3px;width:13.500px;height:13.0px;background:#2e2e2e"></div>
<div class="a" style="left:1161.500px;top:171.3px;width:13.500px;height:13.0px;background:#505050"></div>
<div class="a" style="left:1147px;top:184.0px;width:13.500px;height:13.0px;background:#444444"></div>
<div class="a" style="left:1161.500px;top:184.0px;width:13.500px;height:13.0px;background:#646464"></div>
<div class="a" style="left:1147px;top:196.7px;width:13.500px;height:13.0px;background:#5a5a5a"></div>
<div class="a" style="left:1161.500px;top:196.7px;width:13.500px;height:13.0px;background:#7a7a7a"></div>
<div class="a" style="left:1147px;top:209.3px;width:13.500px;height:13.0px;background:#707070"></div>
<div class="a" style="left:1161.500px;top:209.3px;width:13.500px;height:13.0px;background:#909090"></div>
<div class="a" style="left:1147px;top:222.0px;width:13.500px;height:13.0px;background:#888888"></div>
<div class="a" style="left:1161.500px;top:222.0px;width:13.500px;height:13.0px;background:#a6a6a6"></div>
<div class="a" style="left:1147px;top:234.7px;width:13.500px;height:13.0px;background:#a0a0a0"></div>
<div class="a" style="left:1161.500px;top:234.7px;width:13.500px;height:13.0px;background:#bcbcbc"></div>
<div class="a" style="left:1147px;top:247.4px;width:13.500px;height:13.0px;background:#b8b8b8"></div>
<div class="a" style="left:1161.500px;top:247.4px;width:13.500px;height:13.0px;background:#d0d0d0"></div>
<div class="a" style="left:1147px;top:260.0px;width:13.500px;height:13.0px;background:#d4d4d4"></div>
<div class="a" style="left:1161.500px;top:260.0px;width:13.500px;height:13.0px;background:#e6e6e6"></div>
<div class="a" style="left:1147px;top:272.7px;width:13.500px;height:13.0px;background:#ffffff"></div>
<div class="a" style="left:1161.500px;top:272.7px;width:13.500px;height:13.0px;background:#ffffff"></div>
<div class="a" style="left:1147px;top:285.4px;width:13.500px;height:13.0px;background:#0000f0"></div>
<div class="a" style="left:1161.500px;top:285.4px;width:13.500px;height:13.0px;background:#20208c"></div>
<div class="a" style="left:1147px;top:298.0px;width:13.500px;height:13.0px;background:#00f0f0"></div>
<div class="a" style="left:1161.500px;top:298.0px;width:13.500px;height:13.0px;background:#1c8cd8"></div>
<div class="a" style="left:1147px;top:310.7px;width:13.500px;height:13.0px;background:#00e400"></div>
<div class="a" style="left:1161.500px;top:310.7px;width:13.500px;height:13.0px;background:#0a9c4c"></div>
<div class="a" style="left:1147px;top:323.4px;width:13.500px;height:13.0px;background:#fff000"></div>
<div class="a" style="left:1161.500px;top:323.4px;width:13.500px;height:13.0px;background:#ffe400"></div>
<div class="a" style="left:1147px;top:336.1px;width:13.500px;height:13.0px;background:#f40000"></div>
<div class="a" style="left:1161.500px;top:336.1px;width:13.500px;height:13.0px;background:#e8103c"></div>
<div class="a" style="left:1147px;top:348.7px;width:13.500px;height:13.0px;background:#f800d8"></div>
<div class="a" style="left:1161.500px;top:348.7px;width:13.500px;height:13.0px;background:#de1080"></div>
<div class="a" style="left:1147px;top:361.4px;width:13.500px;height:13.0px;background:#9c00c8"></div>
<div class="a" style="left:1161.500px;top:361.4px;width:13.500px;height:13.0px;background:#b0248c"></div>
<div class="a" style="left:1147px;top:374.1px;width:13.500px;height:13.0px;background:#ff6a10"></div>
<div class="a" style="left:1161.500px;top:374.1px;width:13.500px;height:13.0px;background:#ff8c14"></div>
<div class="a" style="left:1147px;top:386.7px;width:13.500px;height:13.0px;background:#ff9cc4"></div>
<div class="a" style="left:1161.500px;top:386.7px;width:13.500px;height:13.0px;background:#f8a8b8"></div>
<div class="a" style="left:1147px;top:399.4px;width:13.500px;height:13.0px;background:#6e2c32"></div>
<div class="a" style="left:1161.500px;top:399.4px;width:13.500px;height:13.0px;background:#847870"></div>
<div class="a" style="left:1147px;top:412.1px;width:13.500px;height:13.0px;background:#c8c4fc"></div>
<div class="a" style="left:1161.500px;top:412.1px;width:13.500px;height:13.0px;background:#d4d4e4"></div>
<div class="a" style="left:1147px;top:424.7px;width:13.500px;height:13.0px;background:#a8b0f0"></div>
<div class="a" style="left:1161.500px;top:424.7px;width:13.500px;height:13.0px;background:#a0acd8"></div>
<div class="a" style="left:1147px;top:437.4px;width:13.500px;height:13.0px;background:#909ce4"></div>
<div class="a" style="left:1161.500px;top:437.4px;width:13.500px;height:13.0px;background:#8898cc"></div>
<div class="a" style="left:1147px;top:450.1px;width:13.500px;height:13.0px;background:#7c88d0"></div>
<div class="a" style="left:1161.500px;top:450.1px;width:13.500px;height:13.0px;background:#7884c0"></div>
<div class="a" style="left:1147px;top:462.8px;width:13.500px;height:13.0px;background:#7078c0"></div>
<div class="a" style="left:1161.500px;top:462.8px;width:13.500px;height:13.0px;background:#6c78b4"></div>
<div class="a" style="left:1160.500px;top:133px;width:1px;height:345px;background:#cfcfcf"></div>
<div class="a" style="left:1163px;top:299px;width:11px;height:11px;border:1px solid #1a2a3a;box-sizing:border-box"></div>
<div class="a" style="left:1146px;top:476px;width:30px;height:67px;background:#f4f4f4"></div>
<div class="t" style="left:1166px;top:480px;font-size:5px;color:#222">▼</div>
<svg class="a" style="left:1164px;top:490px" width="10" height="10" viewBox="0 0 10 10"><path d="M2 1 v8" stroke="#111" stroke-width="1.600"/><path d="M9 1 l-5 4 5 4z" fill="#111"/></svg>
<div class="a" style="left:1163px;top:514px;width:5px;height:12px;background:#e03020;border-radius:2px"></div>
<div class="a" style="left:1161px;top:528px;width:13px;height:13px;background:#2a7ad0"></div>
<svg class="a" style="left:1161px;top:528px" width="13" height="13" viewBox="0 0 13 13"><path d="M2 3 h4 v3 h-4z M7.500 2.500 h4 v3.500 h-4z M2 7.500 h4 v3 h-4z M7.500 7.500 h4 v3.500 h-4z" fill="#e8f2fc"/></svg>
<!-- taskbar -->
<div class="a" style="left:155px;top:543px;width:1021px;height:29px;background:linear-gradient(#90a1b5,#8395aa 50%,#7a8da4);border-top:1px solid #66748a;box-sizing:border-box"></div>
<!-- start orb -->
<svg class="a" style="left:160px;top:544px" width="30" height="28" viewBox="0 0 30 28"><defs><radialGradient id="orb" cx="0.500" cy="0.400" r="0.600"><stop offset="0" stop-color="#6aa0e0"/><stop offset="0.700" stop-color="#1d4f9c"/><stop offset="1" stop-color="#0c2a5c"/></radialGradient></defs><circle cx="15" cy="14" r="12" fill="url(#orb)" stroke="#223a5a" stroke-width="1"/><path d="M9 9.500 q3 -2 5.500 -0.500 v4 q-2.500 -1.500 -5.500 0.500z" fill="#e8553a"/><path d="M15.500 9 q3 1.500 5.500 -0.500 v4.200 q-2.500 2 -5.500 0.300z" fill="#8ac43c"/><path d="M9 14.500 q3 -2 5.500 -0.500 v4 q-2.500 -1.500 -5.500 0.500z" fill="#3a9ae4"/><path d="M15.500 14 q3 1.500 5.500 -0.500 v4.200 q-2.500 2 -5.500 0.300z" fill="#f4c430"/></svg>
<!-- green browser -->
<svg class="a" style="left:208px;top:546px" width="24" height="24" viewBox="0 0 24 24"><circle cx="12" cy="12" r="10" fill="#6cc040" stroke="#3f8a22" stroke-width="1"/><circle cx="12" cy="12" r="7.500" fill="none" stroke="#d8f4c0" stroke-width="1.600"/><path d="M6.500 12.500 h11 q0 -5 -5.500 -5 q-4.500 0 -5.500 5 q1 5 5.500 5 q3 0 5 -2.500" fill="none" stroke="#fff" stroke-width="2"/></svg>
<div class="tbn" style="left:244px;width:95px"></div>
<svg class="a" style="left:251px;top:547px" width="22" height="22" viewBox="0 0 22 22"><circle cx="11" cy="11" r="10" fill="#2a8cf0"/><path d="M4.500 5 L17 9 L12 11 L15 12 L10 18 L10.500 13.500 L7 12 Z" fill="#fff"/></svg>
<div class="tbt" style="left:277px">钉钉</div>
<div class="tbn" style="left:341px;width:94px"></div>
<svg class="a" style="left:348px;top:547px" width="20" height="22" viewBox="0 0 20 22"><path d="M3 2 h6 v17 h-6z" fill="#f0d070" stroke="#b89a30" stroke-width="0.800"/><path d="M9 2 l5 2 v17 l-5 -2z" fill="#e4bc48" stroke="#b89a30" stroke-width="0.800"/></svg>
<div class="tbt" style="left:375px">F:\2022年...</div>
<div class="tbn" style="left:437px;width:95px"></div>
<svg class="a" style="left:445px;top:548px" width="24" height="20" viewBox="0 0 24 20"><path d="M1 18 L9 6 L14 13 L17 10 L23 18 Z" fill="#3a40c0"/><path d="M6 18 L12 9 L18 18z" fill="#5a62e0"/><circle cx="11" cy="4" r="2.500" fill="#f0c030"/></svg>
<div class="tbt" style="left:471px">img.shijuej...</div>
<div class="tbn" style="left:532px;width:95px"></div>
<svg class="a" style="left:540px;top:548px" width="24" height="20" viewBox="0 0 24 20"><path d="M1 18 L9 6 L14 13 L17 10 L23 18 Z" fill="#3a40c0"/><path d="M6 18 L12 9 L18 18z" fill="#5a62e0"/><circle cx="11" cy="4" r="2.500" fill="#f0c030"/></svg>
<div class="tbt" style="left:567px">XHS_16490...</div>
<div class="tbn" style="left:627px;width:96px"></div>
<svg class="a" style="left:636px;top:548px" width="24" height="20" viewBox="0 0 24 20"><path d="M1 18 L9 6 L14 13 L17 10 L23 18 Z" fill="#3a40c0"/><path d="M6 18 L12 9 L18 18z" fill="#5a62e0"/><circle cx="11" cy="4" r="2.500" fill="#f0c030"/></svg>
<div class="tbt" style="left:662px">XHS_16490...</div>
<div class="tbn" style="left:725px;width:93px"></div>
<svg class="a" style="left:733px;top:547px" width="22" height="22" viewBox="0 0 22 22"><circle cx="11" cy="11" r="10" fill="#f2542a"/><path d="M5.500 9 h8 v5 h-8z M14 10.500 l3.500 -2 v6 l-3.500 -2z" fill="#fff"/><circle cx="9.500" cy="11.500" r="1.500" fill="#f2542a"/></svg>
<div class="tbt" style="left:759px">钉钉视频会议</div>
<div class="tbn act" style="left:820px;width:95px"></div>
<svg class="a" style="left:827px;top:546px" width="22" height="24" viewBox="0 0 22 24"><path d="M11 1 q10 6 8 15 q-3 7 -8 7 q-5 0 -8 -7 q-2 -9 8 -15z" fill="#6aa032" stroke="#4a7a1c" stroke-width="0.800"/><path d="M3 5 L17 20 M6 3 L19 16 M3 10 L12 21" stroke="#dcefc0" stroke-width="1.800"/></svg>
<div class="tbt" style="left:853px;color:#dfe6ee">CorelDRA...</div>
<!-- tray -->
<svg class="a" style="left:920px;top:545px" width="200" height="26" viewBox="920 545 200 26">
 <text x="930" y="563" text-anchor="middle" font-size="14" font-weight="bold" fill="#f0602a" stroke="#fff" stroke-width="0.700" font-family="Liberation Sans, sans-serif">S</text>
 <path d="M948 552 l11 3 -5 2 3 2 -5 6 0 -5 -3 -1z" fill="#2a8cf0"/>
 <ellipse cx="971" cy="558" rx="4.500" ry="6.500" fill="#1a3a7a"/><path d="M969 555 l4 5 -2 2.500 v-9 l2 2.500 -4 5" stroke="#fff" stroke-width="0.900" fill="none"/>
 <rect x="983" y="552" width="10" height="12" fill="#3a8ad8"/><path d="M985 554 h6 v8 h-6z" fill="#c8e0f8"/>
 <path d="M1001 564 l4 -11 3 4 4 1 -2 6z" fill="#1a1a1a"/><circle cx="1010" cy="556" r="2" fill="#eee"/>
 <rect x="1018" y="552" width="13" height="12" fill="#1c2a1c"/><rect x="1020" y="554" width="9" height="8" fill="#6ab82a"/>
 <circle cx="1043" cy="558" r="6" fill="#d8d020"/><path d="M1040 558 h6 M1043 555 v6" stroke="#484" stroke-width="1.500"/>
 <rect x="1056" y="552" width="9" height="12" fill="#f4f4f4" stroke="#555" stroke-width="0.800"/><rect x="1058" y="554" width="5" height="4" fill="#567"/>
 <path d="M1072 564 v-2 h2 v2z M1075.500 564 v-4 h2 v4z M1079 564 v-7 h2 v7z M1082.500 564 v-10 h2 v10z" fill="#c8d0dc"/>
 <path d="M1092 556 h2.500 l3.500 -3.500 v11 l-3.500 -3.500 h-2.500z" fill="#f0f0f0"/><path d="M1100 554 q3 4 0 8" stroke="#dde" stroke-width="1" fill="none"/>
</svg>
<div class="t" style="left:1122px;top:548px;font-size:8.300px;color:#e6ebf0;width:32px;text-align:center">15:51</div>
<div class="t" style="left:1116px;top:561.500px;font-size:8.600px;color:#e6ebf0;width:42px;text-align:center">2022/4/6</div>
<div class="a" style="left:1166px;top:544px;width:10px;height:28px;background:linear-gradient(90deg,#66788e,#8898ac);border-left:1px solid #55657a;box-sizing:border-box"></div>
<!-- dingtalk share bar -->
<div class="a" style="left:458px;top:0;width:417px;height:40px;background:#1d1f22"></div>
<div class="a" style="left:462px;top:12px;width:2px;height:12px;background:#55595e"></div><div class="a" style="left:466px;top:12px;width:2px;height:12px;background:#55595e"></div>
<svg class="a" style="left:458px;top:0" width="417" height="40" viewBox="458 0 417 40">
 <rect x="497.800" y="9" width="4.400" height="8.500" rx="2.200" fill="#9ea2a8"/><path d="M496 15 q0 4.500 4 4.500 q4 0 4 -4.500 M500 19.500 v2.500" stroke="#8a8e94" stroke-width="1" fill="none"/>
 <path d="M548.500 10.500 h10 v8 h-3 l-2 -2.300 -2 2.300 h-3z" fill="#a8acb2"/>
 <circle cx="607" cy="12.500" r="3.200" fill="#a8acb2"/><path d="M601.500 21 q0 -5 5.500 -5 q5.500 0 5.500 5z" fill="#a8acb2"/><circle cx="611.500" cy="15" r="2.400" fill="#7a7e84"/><path d="M607.500 21 q0 -3.500 4 -3.500 q4 0 4 3.500z" fill="#7a7e84"/>
 <line x1="637.500" y1="15" x2="637.500" y2="32" stroke="#3a3d42"/>
 <rect x="747" y="18" width="1.800" height="6" fill="#8a8e94"/><rect x="750.500" y="18" width="1.800" height="6" fill="#8a8e94"/><rect x="754" y="18" width="1.800" height="6" fill="#8a8e94"/>
</svg>
<div class="t" style="left:489px;top:27.500px;font-size:7.500px;color:#9a9ea4;width:22px;text-align:center">静音</div>
<div class="t" style="left:533px;top:27.500px;font-size:7.500px;color:#9a9ea4;width:40px;text-align:center">新的共享</div>
<div class="t" style="left:588px;top:27.500px;font-size:7.500px;color:#9a9ea4;width:40px;text-align:center">全员静音</div>
<div class="t" style="left:763px;top:15.500px;font-size:10.500px;color:#dfe1e4;">01:12:44</div>
<div class="a" style="left:809px;top:8px;width:54px;height:24px;background:#ee4d3a;border-radius:2px"></div>
<div class="t" style="left:809px;top:16px;width:54px;text-align:center;font-size:8.500px;color:#ffd9d2">结束共享</div>
<!-- class status -->
<div class="a" style="left:942px;top:0;width:162px;height:23px;background:#060708"></div>
<div class="a" style="left:942px;top:23px;width:40px;height:13px;background:#1c1c1c"></div>
<svg class="a" style="left:955px;top:4px" width="16" height="14" viewBox="0 0 16 14"><rect x="1" y="6" width="2.500" height="7" fill="#b4b8bc"/><rect x="5.500" y="1" width="2.500" height="12" fill="#b4b8bc"/><rect x="10" y="8" width="2.500" height="5" fill="#b4b8bc"/><rect x="13.500" y="11" width="1.500" height="2" fill="#b4b8bc"/></svg>
<div class="t" style="left:974px;top:6.500px;font-size:9px;color:#9a9ea2">上课中</div>
<svg class="a" style="left:1078px;top:7px" width="14" height="8" viewBox="0 0 14 8"><path d="M1.500 1.500 l5.500 5 5.500 -5" stroke="#c8ccd0" stroke-width="1.500" fill="none"/></svg>
<!-- webcam -->
<svg class="a" style="left:978px;top:19px" width="197" height="109" viewBox="40 42 905 498" preserveAspectRatio="none">
 <defs>
  <filter id="wb" x="-20%" y="-20%" width="140%" height="140%"><feGaussianBlur stdDeviation="7"/></filter>
  <filter id="wb2" x="-20%" y="-20%" width="140%" height="140%"><feGaussianBlur stdDeviation="4"/></filter>
  <filter id="wb3" x="-20%" y="-20%" width="140%" height="140%"><feGaussianBlur stdDeviation="14"/></filter>
  <linearGradient id="wall" x1="0" y1="0" x2="1" y2="0"><stop offset="0" stop-color="#b2b1ac"/><stop offset="0.180" stop-color="#aeada8"/><stop offset="0.235" stop-color="#9e9d98"/><stop offset="0.290" stop-color="#a8a6a0"/><stop offset="0.700" stop-color="#a29e97"/><stop offset="0.900" stop-color="#aca9a2"/><stop offset="1" stop-color="#a5a29b"/></linearGradient>
 </defs>
 <rect x="40" y="42" width="905" height="498" fill="url(#wall)"/>
 <g filter="url(#wb3)">
  <path d="M170 560 Q200 470 300 455 L300 560 Z" fill="#8a8a8c"/>
  <path d="M660 450 Q740 470 760 560 L660 560 Z" fill="#b0b0b2"/>
 </g>
 <g filter="url(#wb)">
  <path d="M483 54 Q420 70 387 111 Q355 160 343 216 Q330 280 317 320 Q300 360 291 390 Q275 460 282 560 L692 560 Q690 470 675 407 Q662 350 657 303 Q650 240 640 198 Q625 130 596 94 Q550 58 483 54 Z" fill="#40383c"/>
  <path d="M445 440 L440 560 L530 560 L525 430 Z" fill="#857477"/>
  <path d="M474 112 Q415 140 388 200 Q372 260 374 329 Q380 380 404 416 Q430 450 465 456 Q500 452 526 425 Q565 385 579 338 Q592 270 589 216 Q565 140 474 112 Z" fill="#d4c2be"/>
  <path d="M474 92 Q395 140 370 260 Q378 150 474 92 Q575 140 596 260 Q572 150 474 92Z" fill="#40373b" stroke="#40373b" stroke-width="4"/>
 </g>
 <g filter="url(#wb2)">
  <path d="M640 200 Q655 300 672 400 M620 160 Q640 300 650 420" stroke="#6a6064" stroke-width="7" fill="none" opacity="0.600"/>
  <path d="M330 300 Q315 380 300 470" stroke="#5a5054" stroke-width="8" fill="none" opacity="0.500"/>
  <ellipse cx="417" cy="276" rx="54" ry="40" fill="#d2ccf3" opacity="0.700"/>
  <ellipse cx="548" cy="276" rx="52" ry="40" fill="#d2ccf3" opacity="0.700"/>
  <ellipse cx="420" cy="290" rx="30" ry="16" fill="#f0ecfd" opacity="0.850"/>
  <ellipse cx="545" cy="290" rx="28" ry="16" fill="#ece8fc" opacity="0.850"/>
  <path d="M385 236 Q420 222 455 236" stroke="#4a3c42" stroke-width="7" fill="none" opacity="0.750"/>
  <path d="M515 236 Q550 222 585 238" stroke="#4a3c42" stroke-width="7" fill="none" opacity="0.750"/>
  <ellipse cx="428" cy="262" rx="22" ry="6" fill="#4a3a44" opacity="0.800"/>
  <ellipse cx="540" cy="262" rx="21" ry="6" fill="#4a3a44" opacity="0.800"/>
  <ellipse cx="417" cy="276" rx="58" ry="44" fill="none" stroke="#988cc0" stroke-width="4"/>
  <ellipse cx="548" cy="276" rx="56" ry="44" fill="none" stroke="#988cc0" stroke-width="4"/>
  <path d="M340 255 l20 8 M604 261 l22 -6 M474 268 q8 -8 18 0" stroke="#988cc0" stroke-width="4" fill="none"/>
  <ellipse cx="483" cy="322" rx="13" ry="16" fill="#ece0de"/>
  <ellipse cx="400" cy="345" rx="22" ry="16" fill="#dcb8b4" opacity="0.600"/>
  <ellipse cx="560" cy="345" rx="22" ry="16" fill="#dcb8b4" opacity="0.600"/>
  <ellipse cx="466" cy="388" rx="37" ry="13" fill="#c67e80"/>
  <ellipse cx="466" cy="442" rx="40" ry="10" fill="#b8a4a2"/>
 </g>
</svg>
<div class="a" style="left:1175px;top:14px;width:1px;height:120px;background:#222"></div>
<!-- chat panel -->
<div class="a" style="left:945px;top:426px;width:212px;height:118px;background:#14161b;border-radius:7px 7px 0 0"></div>
<svg class="a" style="left:945px;top:426px" width="212" height="118" viewBox="945 426 212 118">
 <path d="M959 440.500 h10 M959 444 h10 M959 447.500 h10" stroke="#b8bcc0" stroke-width="1.400"/>
 <path d="M1134 439.500 l9 9 M1143 439.500 l-9 9" stroke="#5c8a70" stroke-width="1.200"/>
 <circle cx="970" cy="474.500" r="9" fill="#e4e4e8"/><circle cx="972" cy="473" r="5" fill="#f6f6f8"/>
 <circle cx="970" cy="500.500" r="9" fill="#2a2e34"/><path d="M962 500 q8 -9 16 0" stroke="#9aa0a8" stroke-width="2.500" fill="none"/><path d="M970 498 v9" stroke="#0c0e10" stroke-width="2.500"/>
 <circle cx="970" cy="526.500" r="9" fill="#1c8cf4"/><rect x="966" y="522.500" width="8" height="8" rx="1.500" fill="none" stroke="#e8f2ff" stroke-width="1.200"/><path d="M968 525 h4 M968 527.500 h4" stroke="#e8f2ff" stroke-width="1"/>
</svg>
<div class="t" style="left:977px;top:439px;font-size:10.300px;color:#b9bcc0">互动消息</div>
<div class="t" style="left:989px;top:470px;font-size:9px;color:#4e525a;width:66px;letter-spacing:0.300px;overflow:hidden">赵威同学(赵威): </div><div class="t" style="left:1056px;top:470px;font-size:9.500px;color:#e6e8ea">1</div>
<div class="t" style="left:989px;top:496px;font-size:9px;color:#4e525a;width:66px;letter-spacing:0.300px;overflow:hidden">黄帅博(黄帅博): </div><div class="t" style="left:1056px;top:496px;font-size:9.500px;color:#e6e8ea">1111</div>
<div class="t" style="left:989px;top:522px;font-size:9px;color:#4e525a;width:66px;letter-spacing:0.300px;overflow:hidden">徐贝瑶(徐贝瑶): </div><div class="t" style="left:1056px;top:522px;font-size:9.500px;color:#e6e8ea">11</div>
</div></div>
<!-- end window -->
<div class="a" style="left:155px;top:572px;width:1021px;height:3px;background:#050505"></div>
<!-- live chat bubbles -->
<div id="chat">
 <div class="bub" style="top:13.500px;width:231px"><span>黄帅博(黄帅博)： 1111</span></div>
 <div class="bub" style="top:59px;width:208px"><span>徐贝瑶(徐贝瑶)： 11</span></div>
 <div class="bub" style="top:105.500px;width:155px"><span>赵威(赵威)： 1</span></div>
 <div class="bub" style="top:151px;width:196px"><span>周佳怡(周佳怡)： 1</span></div>
 <div class="bub" style="top:197px;width:402px;height:40px;border-radius:7px"><span style="color:#ff9a0a;top:7.500px;left:13.500px">直播已结束，李天明、黄政瑞、牛星、庞</span></div>
</div>
<div class="a" style="left:157px;top:366px;width:140px;height:41.500px;background:#1989fb;border-radius:10px"></div>
<div class="t" style="left:171px;top:375px;font-size:21.500px;color:#fff;line-height:24px">最新消息</div>
<svg class="a" style="left:261px;top:376px" width="21" height="22" viewBox="0 0 21 22"><path d="M2.500 3 l8 7.500 8 -7.500 M2.500 11 l8 7.500 8 -7.500" stroke="#fff" stroke-width="2.400" fill="none" stroke-linecap="round" stroke-linejoin="round"/></svg>
</div>
</body>
</html>
